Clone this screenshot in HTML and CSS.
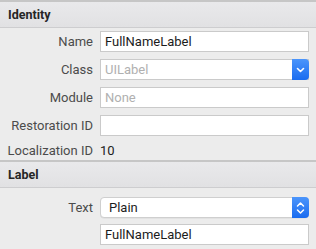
FILE: index.html
```html
<!DOCTYPE html>
<html>
<head>
<meta charset="utf-8">
<link rel="stylesheet" href="styles.css">
</head>
<body>
<div class="panel">
  <section class="section first">
    <div class="section-head">Identity</div>
    <div class="rows">
      <label class="lbl">Name</label>
      <div class="field">FullNameLabel</div>
      <label class="lbl">Class</label>
      <div class="field combo"><span class="ph">UILabel</span>
        <span class="btn"><svg width="9" height="6" viewBox="0 0 9 6"><path d="M1.5 1.5 L4.5 4.5 L7.5 1.5" fill="none" stroke="#fff" stroke-width="1.6" stroke-linecap="round" stroke-linejoin="round"/></svg></span>
      </div>
      <label class="lbl">Module</label>
      <div class="field"><span class="ph">None</span></div>
      <label class="lbl">Restoration ID</label>
      <div class="field"></div>
      <label class="lbl lbl-plain">Localization ID</label>
      <div class="value">10</div>
    </div>
  </section>
  <section class="section second">
    <div class="section-head">Label</div>
    <div class="rows rows2">
      <label class="lbl">Text</label>
      <div class="popup"><span>Plain</span>
        <span class="btn btn-pop"><svg width="9" height="14" viewBox="0 0 9 14"><path d="M1.5 5 L4.5 2 L7.5 5 M1.5 9 L4.5 12 L7.5 9" fill="none" stroke="#fff" stroke-width="1.5" stroke-linecap="round" stroke-linejoin="round"/></svg></span>
      </div>
      <span></span>
      <div class="field">FullNameLabel</div>
    </div>
  </section>
</div>
</body>
</html>
```
FILE: styles.css
```css
html, body {
  margin: 0;
  padding: 0;
  background: #ececec;
}
.panel {
  width: 316px;
  height: 249px;
  overflow: hidden;
  background: #ececec;
  font-family: Roboto, "Liberation Sans", sans-serif;
  font-size: 13px;
  color: #1e1e1e;
}
.section {
  border-top: 2px solid #c6c6c6;
}
.section-head {
  height: 26px;
  box-sizing: border-box;
  display: flex;
  align-items: center;
  padding-left: 8px;
  background: linear-gradient(#e9e9eb, #e1e1e3);
  border-bottom: 1px solid #cdcdcf;
  font-weight: bold;
  font-size: 12.5px;
  color: #262626;
}
.rows {
  display: grid;
  grid-template-columns: 93px 1fr;
  column-gap: 7px;
  row-gap: 7px;
  padding: 3px 7px 2px 0;
  align-items: center;
}
.lbl {
  text-align: right;
  color: #4b4b4b;
}
.field {
  height: 21px;
  box-sizing: border-box;
  background: #fff;
  border: 1px solid #cacaca;
  display: flex;
  align-items: center;
  padding-left: 4px;
  color: #1c1c1c;
}
.ph {
  color: #b0b0b0;
}
.combo {
  position: relative;
}
.btn {
  position: absolute;
  right: -1px;
  top: -1px;
  bottom: -1px;
  width: 17px;
  border-radius: 0 4px 4px 0;
  background: linear-gradient(#4b95fb, #1a6cf0);
  display: flex;
  align-items: center;
  justify-content: center;
}
.value {
  height: 14px;
  line-height: 14px;
  color: #1c1c1c;
}
.rows2 {
  padding-top: 9px;
  row-gap: 6px;
}
.popup {
  position: relative;
  height: 21px;
  box-sizing: border-box;
  background: #fff;
  border: 1px solid #cfcfcf;
  border-radius: 4px;
  display: flex;
  align-items: center;
  padding-left: 8px;
  color: #1c1c1c;
  box-shadow: 0 0.5px 0.5px rgba(0,0,0,0.08);
}
.btn-pop {
  border-radius: 0 4px 4px 0;
}
```
